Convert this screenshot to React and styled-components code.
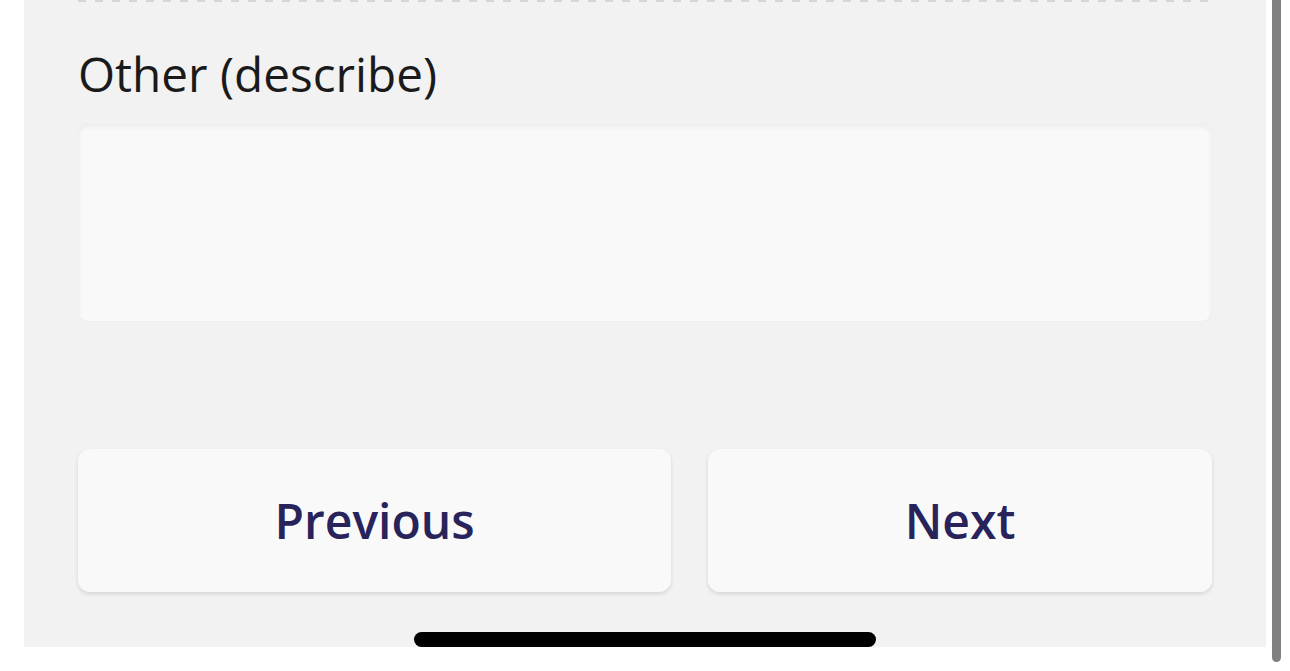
import React from "react";
import styled, { createGlobalStyle } from "styled-components";

const GlobalStyle = createGlobalStyle`
  html, body {
    margin: 0;
    padding: 0;
    background: #ffffff;
    height: 671px;
    overflow: hidden;
  }
  body {
    font-family: "Open Sans", "Noto Sans", sans-serif;
  }
`;

const Screen = styled.div`
  position: relative;
  width: 1290px;
  height: 671px;
  display: flex;
  align-items: flex-start;
`;

const Panel = styled.div`
  margin-left: 24px;
  width: 1242px;
  height: 647px;
  background: #f2f2f2;
  box-sizing: border-box;
  padding: 0 54px;
  display: flex;
  flex-direction: column;
  position: relative;
`;

const Divider = styled.div`
  flex: none;
  height: 2px;
  background: repeating-linear-gradient(
    to right,
    #d6d6d6 0,
    #d6d6d6 8px,
    transparent 8px,
    transparent 17px
  );
`;

const Label = styled.label`
  flex: none;
  margin-top: 39px;
  font-size: 47.7px;
  line-height: 65px;
  color: #1a1a1a;
  font-weight: 400;
`;

const TextArea = styled.textarea`
  flex: none;
  margin-top: 17px;
  height: 199px;
  box-sizing: border-box;
  width: 100%;
  background: #f9f9f9;
  border: 1px solid #f0f0f0;
  border-radius: 10px;
  box-shadow: inset 0 3px 4px rgba(0, 0, 0, 0.05), 0 0 1px rgba(0, 0, 0, 0.06);
  resize: none;
  outline: none;
  font-family: inherit;
  font-size: 32px;
`;

const Actions = styled.div`
  flex: none;
  margin-top: 127px;
  display: flex;
  gap: 37px;
`;

const NavButton = styled.button`
  flex: 1 1 auto;
  height: 143px;
  border: none;
  border-radius: 12px;
  background: #f9f9f9;
  box-shadow: 0 2px 4px rgba(0, 0, 0, 0.12);
  font-family: "Open Sans", "Noto Sans", sans-serif;
  font-size: 48px;
  font-weight: 600;
  color: #29235c;
  padding: 0 40px;
  cursor: pointer;
`;

const HomeIndicator = styled.div`
  position: absolute;
  left: 390px;
  bottom: 0;
  width: 462px;
  height: 15px;
  border-radius: 8px;
  background: #000000;
`;

const ScrollThumb = styled.div`
  position: absolute;
  left: 1272px;
  top: 0;
  width: 9px;
  height: 662px;
  background: #808080;
  border-radius: 0 0 5px 5px;
`;

function App() {
  return (
    <>
      <GlobalStyle />
      <Screen>
        <Panel>
          <Divider />
          <Label htmlFor="other">Other (describe)</Label>
          <TextArea id="other" />
          <Actions>
            <NavButton>Previous</NavButton>
            <NavButton>Next</NavButton>
          </Actions>
          <HomeIndicator />
        </Panel>
        <ScrollThumb />
      </Screen>
    </>
  );
}

export default App;
